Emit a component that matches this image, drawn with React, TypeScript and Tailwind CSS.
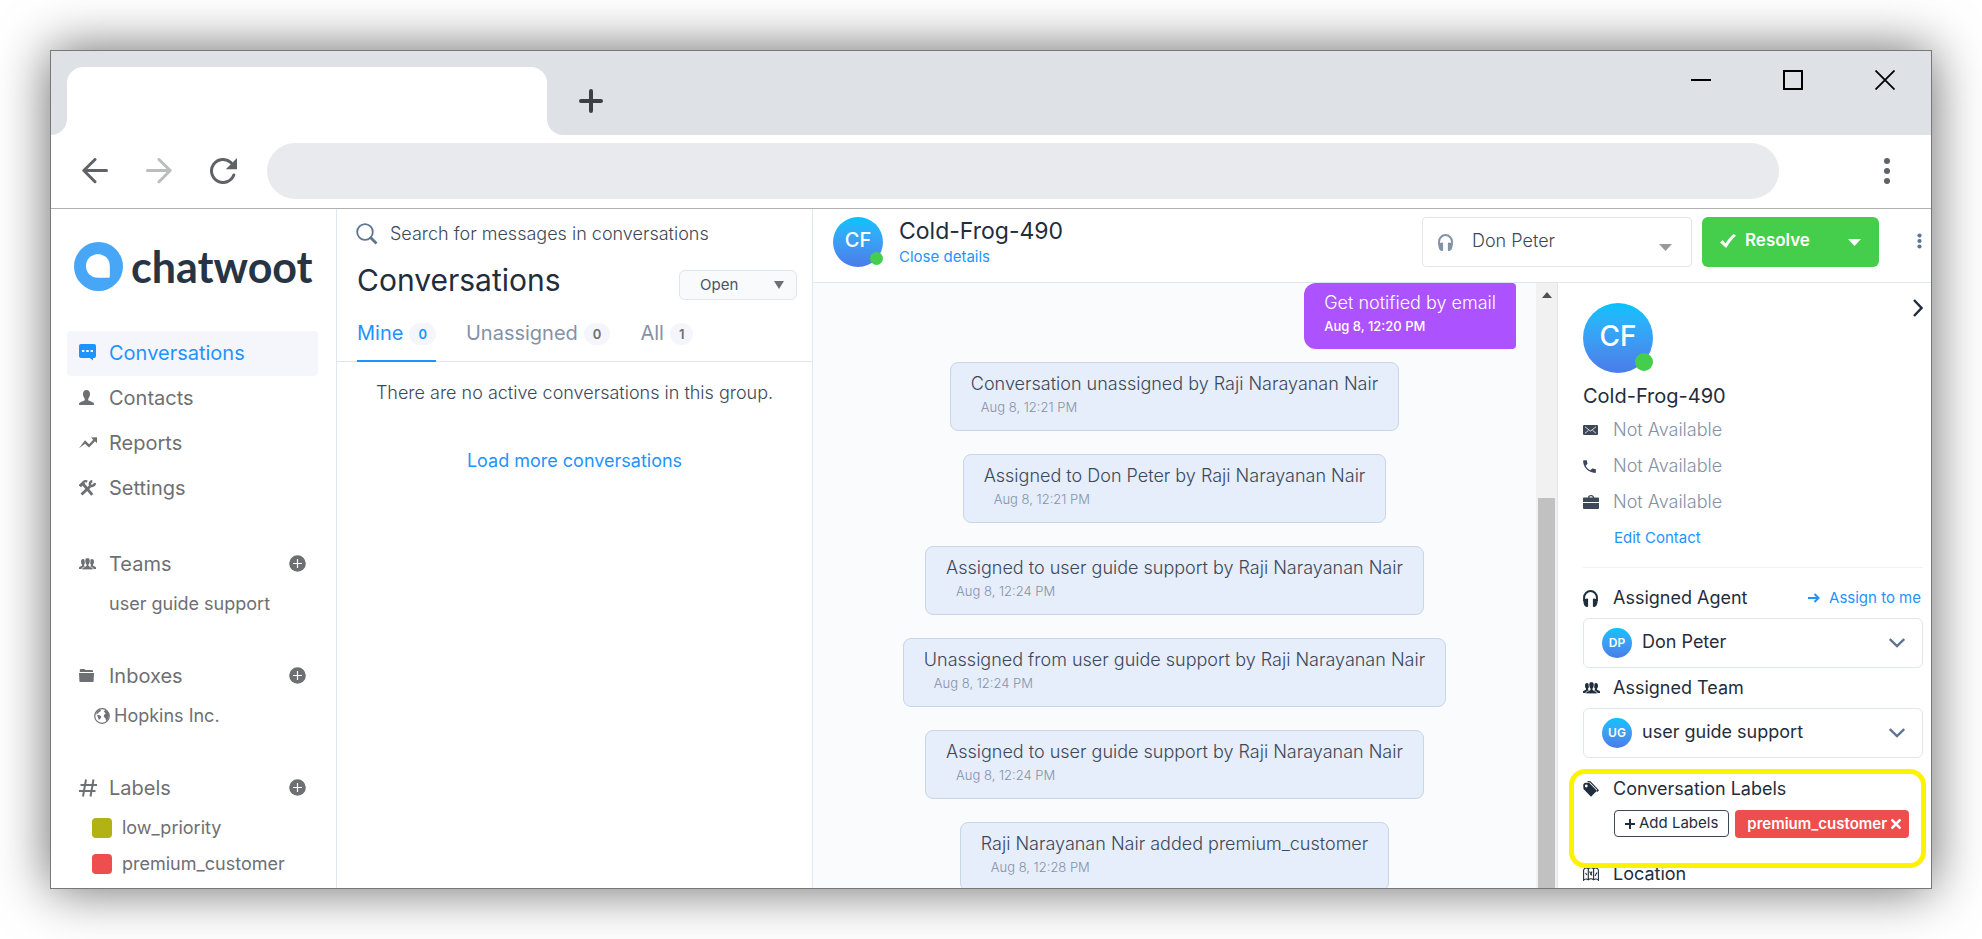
import React from "react";
import { MdPhone } from "react-icons/md";

type IconProps = { className?: string };

const PERSON =
  "M7.5 0C10 0 11 1.8 11 4c0 2-.8 3.4-1.6 4.4-.3.4-.3 1.6.2 2 1 .8 4 1.4 5 2.4.4.5.4 1.4.4 2.2H0c0-.8 0-1.7.4-2.2 1-1 4-1.6 5-2.4.5-.4.5-1.6.2-2C4.8 7.4 4 6 4 4c0-2.2 1-4 3.5-4z";

function ChatIcon() {
  return (
    <svg width="17" height="17" viewBox="0 0 17 17" aria-hidden="true">
      <path fill="currentColor" d="M2 0h13a2 2 0 0 1 2 2v10a2 2 0 0 1-2 2h-1v2.4L10.800 14H2a2 2 0 0 1-2-2V2a2 2 0 0 1 2-2z" />
      <path fill="#fff" d="M3 6h2.400v2H3zM7.300 6h2.400v2H7.300zM11.600 6H14v2h-2.400z" />
    </svg>
  );
}

function PersonIcon() {
  return (
    <svg width="15" height="15" viewBox="0 0 15 15" aria-hidden="true">
      <path fill="currentColor" d={PERSON} />
    </svg>
  );
}

function GraphIcon() {
  return (
    <svg width="18" height="12" viewBox="0 0 18 12" aria-hidden="true">
      <path fill="currentColor" d="M0 11.300 6 3.300l4 3.900 4.200-4.500L12 .6 18 .2v6l-2-1.900-6 6.300-4-3.900z" />
    </svg>
  );
}

function ToolsIcon() {
  return (
    <svg width="17" height="16" viewBox="0 0 17 16" aria-hidden="true">
      <g fill="none" stroke="currentColor">
        <path strokeWidth="3.200" d="M.8 6.200 5 2.300" />
        <path strokeWidth="2" d="M4 2.200C5.500 1 7 .9 8.300 1.500" />
        <path strokeWidth="2.800" d="m4.500 4.500 8.800 10.300" />
        <path strokeWidth="2.800" d="m2.500 14.600 8.700-8.400" />
        <path strokeWidth="2.500" d="M13.300 1.200c-1.800.3-2.700 1.700-2.300 3.600.9 1.800 4.600 1.400 5-1.800" />
      </g>
    </svg>
  );
}

function PeopleIcon() {
  return (
    <svg width="17" height="12" viewBox="0 0 17 12" aria-hidden="true">
      <g fill="currentColor">
        <path transform="translate(-.3 1) scale(.58 .66)" d={PERSON} />
        <path transform="translate(8.600 1) scale(.58 .66)" d={PERSON} />
        <path stroke="#fff" strokeWidth=".9" transform="translate(2.900 -.2) scale(.75 .8)" d={PERSON} />
      </g>
    </svg>
  );
}

function FolderIcon() {
  return (
    <svg width="15" height="13" viewBox="0 0 15 13" aria-hidden="true">
      <path fill="currentColor" d="M1.500 0h4l1 1H13a1 1 0 0 1 1 1v1H.8V.8zM0 4h15l-.4 8.200a.8.8 0 0 1-.8.800H1.200a.8.8 0 0 1-.8-.8z" />
    </svg>
  );
}

function EarthIcon() {
  return (
    <svg width="16" height="16" viewBox="0 0 16 16" aria-hidden="true">
      <circle cx="8" cy="8" r="7.300" fill="none" stroke="currentColor" strokeWidth="1.200" />
      <path fill="currentColor" d="M2.600 3.800 5.800 1.400l1.200.8-.8 1.200-1.600 1L4 5.600 2.200 6.200zM3 7.200l2.200-.2 2.200 1.800-1 1.600L4.800 12l-.6-2.200zM9.800 3.200l1.600-1.200 2.400 2L15 7l-.6 3.800-2.200 2.400-.8-3-1.600-1.400.2-2 1.800-1z" />
    </svg>
  );
}

function HashIcon() {
  return (
    <svg width="18" height="18" viewBox="0 0 18 18" aria-hidden="true">
      <path fill="none" stroke="currentColor" strokeWidth="2" d="M7 .5 4 17.500M14.500.5l-3 17M1.500 6H18M0 12h16.500" />
    </svg>
  );
}

function PlusCircleIcon() {
  return (
    <svg width="17" height="17" viewBox="0 0 17 17" className="block" aria-hidden="true">
      <circle cx="8.500" cy="8.500" r="8.300" fill="currentColor" />
      <path stroke="#fff" strokeWidth="1.200" d="M8.500 4v9M4 8.500h9" />
    </svg>
  );
}

function HeadphoneIcon({ className }: IconProps) {
  return (
    <svg width="15" height="17" viewBox="0 0 15 17" className={className} aria-hidden="true">
      <path fill="none" stroke="currentColor" strokeWidth="2" d="M1.100 11V7.500a6.400 6.400 0 0 1 12.800 0V11" />
      <path fill="currentColor" d="M.4 9.500 4 8.500c.6 0 1.100.3 1.100.8v6.900c0 .4-.4.800-.8.800-2.400 0-4.200-2.500-3.900-7.500zM14.600 9.500 11 8.500c-.6 0-1.100.3-1.100.8v6.900c0 .4.4.800.8.800 2.400 0 4.200-2.500 3.900-7.500z" />
    </svg>
  );
}

function MailIcon() {
  return (
    <svg width="15" height="10" viewBox="0 0 15 10" aria-hidden="true">
      <rect width="15" height="10" rx="1" fill="currentColor" />
      <path fill="none" stroke="#fff" strokeWidth=".8" d="m2 1.800 5.500 4.300L13 1.800M2 8.300l3.500-3M13 8.300l-3.500-3" />
    </svg>
  );
}

function BriefcaseIcon() {
  return (
    <svg width="16" height="14" viewBox="0 0 16 14" aria-hidden="true">
      <path fill="currentColor" d="M5 2.500C5 1 6 0 8 0s3 1 3 2.500h4a1 1 0 0 1 1 1V7H0V3.500a1 1 0 0 1 1-1zm1.300 0h3.400C9.700 1.700 9 1.200 8 1.200s-1.700.5-1.700 1.300zM0 8h16v5a1 1 0 0 1-1 1H1a1 1 0 0 1-1-1z" />
    </svg>
  );
}

function TagIcon() {
  return (
    <svg width="16" height="16" viewBox="0 0 16 16" aria-hidden="true">
      <path fill="currentColor" fillRule="evenodd" d="M.2 4.200C.3 2.600 1.500 1.600 3 1.700l3.300.2 7.600 7.900L8 15.800.500 8zM3.300 3.600a1.400 1.400 0 1 0 0 2.800 1.400 1.400 0 0 0 0-2.800z" />
      <path fill="none" stroke="currentColor" strokeWidth="1.200" d="M4.500.700 7.200.900l8 8.300-1.300 1.500" />
    </svg>
  );
}

function MapIcon() {
  return (
    <svg width="16" height="14" viewBox="0 0 16 14" aria-hidden="true">
      <path fill="none" stroke="currentColor" strokeWidth="1.100" d="M.6 13.200V3C1.500 1 4 .3 5.300 1.800 6.500.3 9.300.3 10.600 1.800 12 .3 14.500 1 15.400 3v10.200c-1.200-1.600-3.400-1.600-4.800-.4-1.400-1.200-3.900-1.200-5.300 0-1.400-1.200-3.500-1.200-4.700.4zM5.300 1.800v11M10.600 1.800v11M2.500 6l1.500 2M6.500 4.500 9 8.500M9 4.500 7.500 8M12 9l2-3.500" />
    </svg>
  );
}

function SearchIcon() {
  return (
    <svg width="22" height="22" viewBox="0 0 22 22" aria-hidden="true">
      <circle cx="9" cy="9" r="7.800" fill="none" stroke="currentColor" strokeWidth="1.800" />
      <path stroke="currentColor" strokeWidth="2.800" d="m14 14 6.500 6.500" />
    </svg>
  );
}

function CaretDown({ className }: IconProps) {
  return (
    <svg width="13" height="7" viewBox="0 0 13 7" className={className} aria-hidden="true">
      <path fill="currentColor" d="M0 0h13L6.500 7z" />
    </svg>
  );
}

function ChevronDown() {
  return (
    <svg width="16" height="10" viewBox="0 0 16 10" className="pointer-events-none mr-[17px] shrink-0 text-[#5d7592]" aria-hidden="true">
      <path fill="none" stroke="currentColor" strokeWidth="2.400" d="m.8 1 7.200 7 7.200-7" />
    </svg>
  );
}

function BrowserChrome() {
  return (
    <header className="shrink-0">
      <div className="flex h-[84px] items-end bg-[#dee1e6]">
        <div className="h-4 w-4 shrink-0 bg-white">
          <div className="h-full w-full rounded-br-2xl bg-[#dee1e6]" />
        </div>
        <div className="h-[68px] w-[480px] rounded-t-2xl bg-white" />
        <div className="h-4 w-4 shrink-0 bg-white">
          <div className="h-full w-full rounded-bl-2xl bg-[#dee1e6]" />
        </div>
        <button type="button" aria-label="New tab" className="ml-4 mb-[22px]">
          <svg width="24" height="24" viewBox="0 0 24 24" className="block">
            <path stroke="#3c4043" strokeWidth="4" strokeLinecap="round" d="M12 2v20M2 12h20" />
          </svg>
        </button>
        <div className="mr-9 mb-[45px] ml-auto flex gap-[72px]">
          <button type="button" aria-label="Minimise">
            <svg width="20" height="20" viewBox="0 0 20 20" className="block">
              <path stroke="#000" strokeWidth="2" d="M0 10h20" />
            </svg>
          </button>
          <button type="button" aria-label="Maximise">
            <svg width="20" height="20" viewBox="0 0 20 20" className="block">
              <path fill="none" stroke="#000" strokeWidth="2" d="M1 1h18v18H1z" />
            </svg>
          </button>
          <button type="button" aria-label="Close">
            <svg width="20" height="20" viewBox="0 0 20 20" className="block">
              <path stroke="#000" strokeWidth="1.800" d="m.5.500 19 19M19.500.5l-19 19" />
            </svg>
          </button>
        </div>
      </div>
      <div className="flex h-[74px] items-center border-b border-[#b0b0b0] bg-white pr-[41px] pb-px pl-[31px]">
        <div className="flex w-[185px] gap-[38px]">
          <button type="button" aria-label="Back">
            <svg width="26" height="26" viewBox="0 0 26 26" className="block">
              <path fill="none" stroke="#5f6368" strokeWidth="3" strokeLinecap="round" strokeLinejoin="round" d="M24.500 12.500H2M13 1.500 1.800 12.500 13 23.700" />
            </svg>
          </button>
          <button type="button" aria-label="Forward">
            <svg width="26" height="26" viewBox="0 0 26 26" className="block">
              <path fill="none" stroke="#babcbe" strokeWidth="3" strokeLinecap="round" strokeLinejoin="round" d="M1.500 12.500H24M13 1.500l11.200 11L13 23.700" />
            </svg>
          </button>
          <button type="button" aria-label="Reload">
            <svg width="28" height="26" viewBox="0 0 28 26" className="block">
              <path fill="none" stroke="#5f6368" strokeWidth="3" strokeLinecap="round" d="M23.800 17A11.500 11.500 0 1 1 21 4.700" />
              <path fill="#5f6368" d="M27 0v11.200H15.800z" />
            </svg>
          </button>
        </div>
        <input type="text" aria-label="Address" className="h-14 min-w-0 flex-1 rounded-full bg-[#e8eaed] px-7 outline-none" />
        <button type="button" aria-label="Browser menu" className="ml-[105px]">
          <svg width="6" height="26" viewBox="0 0 6 26" fill="#5f6368" className="block">
            <circle cx="3" cy="3" r="3" />
            <circle cx="3" cy="13" r="3" />
            <circle cx="3" cy="23" r="3" />
          </svg>
        </button>
      </div>
    </header>
  );
}

function NavLink({ icon, label, active }: { icon: React.ReactNode; label: string; active?: boolean }) {
  return (
    <li>
      <a
        href="#"
        className={
          active
            ? "flex h-[45px] items-center rounded bg-[#f4f6fb] pb-[2px] pl-3 text-xl text-[#1f93ff]"
            : "flex h-[45px] items-center rounded pb-[2px] pl-3 text-xl text-[#6e6f73]"
        }
      >
        <span className="w-[30px]">{icon}</span>
        {label}
      </a>
    </li>
  );
}

function NavGroup({ icon, label, children }: { icon: React.ReactNode; label: string; children: React.ReactNode }) {
  return (
    <section className="mt-[31px] text-[#6e6f73]">
      <div className="flex h-[45px] items-center pr-3 pb-[2px] pl-3">
        <span className="w-[30px]">{icon}</span>
        <h2 className="flex-1 text-xl">{label}</h2>
        <button type="button" aria-label={"Add to " + label}>
          <PlusCircleIcon />
        </button>
      </div>
      <ul className="-mt-px pb-px text-lg leading-9">{children}</ul>
    </section>
  );
}

function Sidebar() {
  return (
    <nav className="w-[286px] shrink-0 border-r border-[#e0e6ed] pt-[33px] pr-[18px] pl-4">
      <a href="#" className="flex h-[49px] items-center gap-2 pl-[7px]">
        <svg width="49" height="49" viewBox="0 0 49 49" aria-hidden="true">
          <circle cx="24.500" cy="24.500" r="24.500" fill="#47a7f6" />
          <path fill="#fff" d="M24 12.200c6.800 0 11.800 5 11.800 11.800v10.300c0 1-.6 1.500-1.500 1.500H24c-6.800 0-12-5-12-11.800s5.200-11.800 12-11.800z" />
        </svg>
        <span className="font-[Lato,sans-serif] text-[43px] leading-[49px] font-bold text-[#273444]">chatwoot</span>
      </a>
      <ul className="mt-10">
        <NavLink icon={<ChatIcon />} label="Conversations" active />
        <NavLink icon={<PersonIcon />} label="Contacts" />
        <NavLink icon={<GraphIcon />} label="Reports" />
        <NavLink icon={<ToolsIcon />} label="Settings" />
      </ul>
      <NavGroup icon={<PeopleIcon />} label="Teams">
        <li className="pl-[42px]">user guide support</li>
      </NavGroup>
      <NavGroup icon={<FolderIcon />} label="Inboxes">
        <li className="flex items-center gap-1 pl-[27px]">
          <EarthIcon />
          Hopkins Inc.
        </li>
      </NavGroup>
      <NavGroup icon={<HashIcon />} label="Labels">
        <li className="flex items-center gap-[10px] pl-[25px]">
          <span className="h-5 w-5 rounded bg-[#b2b214]" />
          low_priority
        </li>
        <li className="flex items-center gap-[10px] pl-[25px]">
          <span className="h-5 w-5 rounded bg-[#ef4e4f]" />
          premium_customer
        </li>
      </NavGroup>
    </nav>
  );
}

function Tab({ label, count, active }: { label: string; count: number; active?: boolean }) {
  return (
    <button
      type="button"
      role="tab"
      aria-selected={!!active}
      className={
        active
          ? "-mb-px flex items-start gap-[6px] border-b-2 border-[#1f93ff] text-xl leading-6 text-[#1f93ff]"
          : "-mb-px flex items-start gap-[6px] border-b-2 border-transparent text-xl leading-6 text-[#8492a6]"
      }
    >
      {label}
      <span
        className={
          active
            ? "mt-[2px] rounded-full bg-[#f4f6fb] px-[9px] text-[13px] leading-[22px] font-semibold text-[#1f93ff]"
            : "mt-[2px] rounded-full bg-[#f4f6fb] px-[9px] text-[13px] leading-[22px] font-semibold text-[#6e6f73]"
        }
      >
        {count}
      </span>
    </button>
  );
}

function ConversationList() {
  return (
    <section className="flex w-[476px] shrink-0 flex-col border-r border-[#e0e6ed]">
      <label className="flex h-[50px] items-center pl-[19px] text-[#5d7592]">
        <SearchIcon />
        <input
          type="search"
          placeholder="Search for messages in conversations"
          className="ml-3 min-w-0 flex-1 text-lg font-light outline-none placeholder:text-[#3c4858]"
        />
      </label>
      <div className="flex h-[50px] items-center justify-between pr-[15px] pl-5">
        <h1 className="pb-2 text-3xl text-[#1f2d3d]">Conversations</h1>
        <div className="mt-[2px] flex h-[30px] w-[118px] items-center rounded-md border border-[#e0e6ed] bg-[#f9fafc] text-[#6e6f73]">
          <select aria-label="Status" className="h-full min-w-0 flex-1 appearance-none pl-5 text-[15px] text-[#4b5563] outline-none">
            <option>Open</option>
          </select>
          <svg width="10" height="8" viewBox="0 0 10 8" className="pointer-events-none mr-3" aria-hidden="true">
            <path fill="currentColor" d="M0 0h10L5 8z" />
          </svg>
        </div>
      </div>
      <div role="tablist" className="flex h-[53px] items-stretch gap-[30px] border-b border-[#e0e6ed] pt-3 pl-5">
        <Tab label="Mine" count={0} active />
        <Tab label="Unassigned" count={0} />
        <Tab label="All" count={1} />
      </div>
      <p className="mt-[17px] text-center text-lg font-light text-[#3c4858]">There are no active conversations in this group.</p>
      <button type="button" className="mt-10 text-lg text-[#1f93ff]">
        Load more conversations
      </button>
    </section>
  );
}

function ChatHeader() {
  return (
    <div className="flex h-[74px] shrink-0 items-start border-b border-[#e0e6ed] pt-2 pr-[9px] pl-5">
      <div className="relative h-[50px] w-[50px] rounded-full bg-linear-to-b from-[#00c2ff] to-[#4a7be8]">
        <span className="block text-center text-xl leading-[46px] font-medium text-white">CF</span>
        <span className="absolute right-0 bottom-[2px] h-[13px] w-[13px] rounded-full bg-[#44ce4b]" />
      </div>
      <div className="ml-4">
        <h2 className="text-[23px] leading-7 text-[#1f2d3d]">Cold-Frog-490</h2>
        <button type="button" className="block text-[15px] leading-6 text-[#1f93ff]">
          Close details
        </button>
      </div>
      <div className="ml-auto flex h-[50px] w-[270px] items-center rounded border border-[#e0e6ed] pl-[15px]">
        <HeadphoneIcon className="shrink-0 text-[#8492a6]" />
        <select aria-label="Agent" className="h-full min-w-0 flex-1 appearance-none pb-[2px] pl-[19px] text-lg font-light text-[#3c4858] outline-none">
          <option>Don Peter</option>
        </select>
        <CaretDown className="pointer-events-none mt-[10px] mr-[19px] text-[#999999]" />
      </div>
      <div className="ml-[10px] flex h-[50px] w-[177px] items-center rounded-md bg-[#44ce4b] text-white">
        <button type="button" className="flex h-full flex-1 items-center gap-[9px] pb-[2px] pl-[18px] text-[17px] font-semibold">
          <svg width="16" height="14" viewBox="0 0 16 14" aria-hidden="true">
            <path fill="currentColor" d="M0 8.500 2.800 6l2.700 3.500C7.800 5.500 10.500 2.500 13.800 0L16 1.800C12 5.500 9 9 6.200 14z" />
          </svg>
          Resolve
        </button>
        <button type="button" aria-label="More resolve actions" className="flex h-full items-center pr-[18px] pl-3">
          <CaretDown />
        </button>
      </div>
      <button type="button" aria-label="More actions" className="ml-[37px] flex h-12 w-[6px] items-center justify-center">
        <svg width="5" height="16" viewBox="0 0 5 16" fill="#5d7592" className="shrink-0">
          <circle cx="2.500" cy="2.500" r="2.100" />
          <circle cx="2.500" cy="8" r="2.100" />
          <circle cx="2.500" cy="13.500" r="2.100" />
        </svg>
      </button>
    </div>
  );
}

const ACTIVITY = [
  { text: "Conversation unassigned by Raji Narayanan Nair", time: "Aug 8, 12:21 PM" },
  { text: "Assigned to Don Peter by Raji Narayanan Nair", time: "Aug 8, 12:21 PM" },
  { text: "Assigned to user guide support by Raji Narayanan Nair", time: "Aug 8, 12:24 PM" },
  { text: "Unassigned from user guide support by Raji Narayanan Nair", time: "Aug 8, 12:24 PM" },
  { text: "Assigned to user guide support by Raji Narayanan Nair", time: "Aug 8, 12:24 PM" },
  { text: "Raji Narayanan Nair added premium_customer", time: "Aug 8, 12:28 PM" },
];

function Messages() {
  return (
    <div className="flex min-w-0 flex-1 bg-[#f9fbfc]">
      <ul className="flex min-w-0 flex-1 flex-col items-center overflow-hidden px-5">
        <li className="mb-[13px] h-[66px] shrink-0 self-end rounded-l-xl rounded-r bg-[#ac52ff] px-5 pt-2 text-white">
          <p className="text-lg leading-6 font-light">Get notified by email</p>
          <time className="block text-[13px] leading-[22px] font-medium">Aug 8, 12:20 PM</time>
        </li>
        {ACTIVITY.map((item, i) => (
          <li key={i} className="mb-[23px] h-[69px] shrink-0 rounded-lg border border-[#c8d6e6] bg-[#e6edfb] px-5 pt-[9px]">
            <p className="text-lg leading-6 font-light text-[#3c4858]">{item.text}</p>
            <time className="ml-[10px] block text-[13px] leading-[22px] font-light text-[#8492a6]">{item.time}</time>
          </li>
        ))}
      </ul>
      <div className="flex w-[21px] shrink-0 flex-col items-center bg-[#f1f1f1]" aria-hidden="true">
        <svg width="10" height="6" viewBox="0 0 10 6" className="mt-[9px] shrink-0">
          <path fill="#505050" d="M5 0l5 6H0z" />
        </svg>
        <div className="mt-[200px] w-[17px] flex-1 bg-[#c1c1c1]" />
      </div>
    </div>
  );
}

function ContactRow({ icon, children }: { icon: React.ReactNode; children: React.ReactNode }) {
  return (
    <li className="flex h-9 items-center text-lg font-light text-[#8492a6]">
      <span className="w-[30px] text-[#3c4858]">{icon}</span>
      {children}
    </li>
  );
}

function PanelTitle({ icon, children }: { icon: React.ReactNode; children: React.ReactNode }) {
  return (
    <h3 className="flex h-10 items-center text-lg text-[#1f2d3d]">
      <span className="w-[30px]">{icon}</span>
      {children}
    </h3>
  );
}

function AvatarSelect({ initials, value, label }: { initials: string; value: string; label: string }) {
  return (
    <div className="flex h-[50px] items-center rounded-md border border-[#e0e6ed] pl-[18px]">
      <span className="h-[30px] w-[30px] shrink-0 rounded-full bg-linear-to-b from-[#00c2ff] to-[#4a7be8] text-center text-xs leading-[30px] font-semibold text-white">
        {initials}
      </span>
      <select aria-label={label} className="h-full min-w-0 flex-1 appearance-none pb-[2px] pl-[10px] text-lg text-[#1f2d3d] outline-none">
        <option>{value}</option>
      </select>
      <ChevronDown />
    </div>
  );
}

function ContactPanel() {
  return (
    <aside className="relative w-[374px] shrink-0 overflow-hidden border-l border-[#e0e6ed] bg-white pt-5 pr-2 pl-[25px]">
      <button type="button" aria-label="Close panel" className="absolute top-4 right-2">
        <svg width="10" height="18" viewBox="0 0 10 18" className="block">
          <path fill="none" stroke="#1f2d3d" strokeWidth="2.400" d="m1 1 7.500 8L1 17" />
        </svg>
      </button>
      <div className="relative h-[70px] w-[70px] rounded-full bg-linear-to-b from-[#00c2ff] to-[#4a7be8]">
        <span className="block text-center text-[28px] leading-[66px] font-medium text-white">CF</span>
        <span className="absolute right-0 bottom-[2px] h-[18px] w-[18px] rounded-full bg-[#44ce4b]" />
      </div>
      <h2 className="mt-[7px] text-xl leading-8 text-[#1f2d3d]">Cold-Frog-490</h2>
      <ul>
        <ContactRow icon={<MailIcon />}>Not Available</ContactRow>
        <ContactRow icon={<MdPhone size={17} className="-ml-[2px]" />}>Not Available</ContactRow>
        <ContactRow icon={<BriefcaseIcon />}>Not Available</ContactRow>
      </ul>
      <button type="button" className="ml-[31px] block h-9 text-[15px] text-[#1f93ff]">
        Edit Contact
      </button>
      <hr className="mt-[11px] border-[#f0f2f5]" />
      <div className="mt-[10px] flex items-center justify-between">
        <PanelTitle icon={<HeadphoneIcon />}>Assigned Agent</PanelTitle>
        <button type="button" className="mr-[2px] flex items-center gap-[9px] text-[15px] text-[#1f93ff]">
          <svg width="12" height="10" viewBox="0 0 12 10" aria-hidden="true">
            <path fill="none" stroke="currentColor" strokeWidth="2" d="M0 5h10M6.500 1l4 4-4 4" />
          </svg>
          Assign to me
        </button>
      </div>
      <AvatarSelect initials="DP" value="Don Peter" label="Assigned Agent" />
      <PanelTitle icon={<PeopleIcon />}>Assigned Team</PanelTitle>
      <AvatarSelect initials="UG" value="user guide support" label="Assigned Team" />
      <div className="relative mt-[11px] h-[85px]">
        <div className="pointer-events-none absolute top-0 -right-[3px] -left-[14px] z-10 h-[99px] rounded-2xl border-5 border-[#fff200]" />
        <PanelTitle icon={<TagIcon />}>Conversation Labels</PanelTitle>
        <div className="mt-px flex gap-[6px] pl-[31px]">
          <button
            type="button"
            className="flex h-[27px] items-center gap-1 rounded border border-[#3c4858] px-[10px] text-[15px] whitespace-nowrap text-[#1f2d3d]"
          >
            <svg width="10" height="10" viewBox="0 0 10 10" aria-hidden="true">
              <path stroke="currentColor" strokeWidth="2" d="M5 0v10M0 5h10" />
            </svg>
            Add Labels
          </button>
          <span className="flex h-7 items-center gap-1 rounded bg-[#ef4e4f] pr-2 pl-3 text-[15px] font-semibold text-white">
            premium_customer
            <button type="button" aria-label="Remove premium_customer">
              <svg width="10" height="10" viewBox="0 0 10 10" className="block">
                <path stroke="currentColor" strokeWidth="2.600" d="m.5.500 9 9M9.500.5l-9 9" />
              </svg>
            </button>
          </span>
        </div>
      </div>
      <PanelTitle icon={<MapIcon />}>Location</PanelTitle>
    </aside>
  );
}

export default function App() {
  return (
    <div className="flex h-screen overflow-hidden bg-white p-[50px] font-[Inter,sans-serif]">
      <div className="flex min-w-0 flex-1 flex-col overflow-hidden border border-[#77787a] bg-white shadow-[0_0_50px_rgba(0,0,0,0.6)]">
        <BrowserChrome />
        <div className="flex min-h-0 flex-1">
          <Sidebar />
          <ConversationList />
          <main className="flex min-w-0 flex-1 flex-col">
            <ChatHeader />
            <div className="flex min-h-0 flex-1">
              <Messages />
              <ContactPanel />
            </div>
          </main>
        </div>
      </div>
    </div>
  );
}
